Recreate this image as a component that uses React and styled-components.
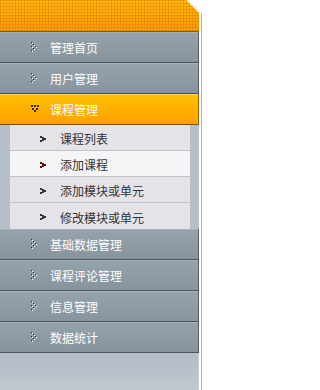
import React, { useState } from "react";
import styled, { createGlobalStyle } from "styled-components";

const menu = [
  { title: "管理首页" },
  { title: "用户管理" },
  {
    title: "课程管理",
    open: true,
    children: ["课程列表", "添加课程", "添加模块或单元", "修改模块或单元"],
  },
  { title: "基础数据管理" },
  { title: "课程评论管理" },
  { title: "信息管理" },
  { title: "数据统计" },
];

const DotArrow = () => (
  <svg width="9" height="10" viewBox="0 0 9 10">
    {[
      [0, 0],
      [2, 2],
      [4, 4],
      [2, 6],
      [0, 8],
      [0, 4],
    ].map(([x, y]) => (
      <g key={`${x}-${y}`}>
        <rect x={x + 1} y={y + 1} width="1" height="1" fill="#fff" />
        <rect x={x} y={y} width="1" height="1" fill="#1e242a" />
      </g>
    ))}
  </svg>
);

const DotDown = () => (
  <svg width="9" height="8" viewBox="0 0 9 8">
    {[
      [0, 0],
      [3, 0],
      [6, 0],
      [1, 3],
      [5, 3],
      [3, 5],
    ].map(([x, y]) => (
      <g key={`${x}-${y}`}>
        <rect x={x + 1} y={y + 1} width="1" height="1" fill="#ffe27a" />
        <rect x={x} y={y} width="2" height="2" fill="#3a2500" />
      </g>
    ))}
  </svg>
);

const SubArrow = ({ active }) => (
  <svg width="6" height="6" viewBox="0 0 6 6">
    <path
      d="M0 0h2v1h2v1h2v2h-2v1h-2v1h-2v-2h2v-2h-2z"
      fill={active ? "#6a0a0a" : "#2e3640"}
    />
  </svg>
);

export default function App() {
  const [current, setCurrent] = useState("添加课程");

  return (
    <>
      <GlobalStyle />
      <Frame>
        <Bevel width="16" height="16" viewBox="0 0 16 16">
          <line x1="1" y1="-0.5" x2="14.5" y2="13" stroke="#a9a9a9" />
        </Bevel>
        <Menu>
          <Header />
          {menu.map((item) => (
            <Section key={item.title}>
              <Item $open={item.open}>
                <IconBox>{item.open ? <DotDown /> : <DotArrow />}</IconBox>
                {item.title}
              </Item>
              {item.open && (
                <SubList>
                  {item.children.map((child) => (
                    <SubItem
                      key={child}
                      $active={child === current}
                      onClick={() => setCurrent(child)}
                    >
                      <SubIcon>
                        <SubArrow active={child === current} />
                      </SubIcon>
                      {child}
                    </SubItem>
                  ))}
                </SubList>
              )}
            </Section>
          ))}
          <Filler />
        </Menu>
      </Frame>
    </>
  );
}

const GlobalStyle = createGlobalStyle`
  html, body {
    margin: 0;
    padding: 0;
    background: #fff;
  }
  body {
    font-family: "Noto Sans CJK SC", "Liberation Sans", sans-serif;
    font-size: 12px;
  }
`;

const Frame = styled.div`
  position: relative;
  width: 199px;
  height: 390px;
  padding-right: 2px;
  border-right: 1px solid #b4b4b4;
  background: #fff;
  clip-path: polygon(0 0, 188px 0, 202px 14px, 202px 100%, 0 100%);
`;

const Bevel = styled.svg`
  position: absolute;
  top: 0;
  left: 187px;
  z-index: 2;
`;

const Menu = styled.div`
  display: flex;
  flex-direction: column;
  height: 100%;
  width: 199px;
  clip-path: polygon(0 0, 186px 0, 199px 13px, 199px 100%, 0 100%);
`;

const Header = styled.div`
  height: 31px;
  flex-shrink: 0;
  border-bottom: 1px solid #7a5c1c;
  background-color: #ffa800;
  background-image: linear-gradient(
      90deg,
      rgba(214, 120, 0, 0.4) 1px,
      transparent 1px
    ),
    linear-gradient(rgba(214, 120, 0, 0.4) 1px, transparent 1px),
    linear-gradient(#ffbc10, #ff9a00);
  background-size: 3px 3px, 3px 3px, 100% 100%;
`;

const Section = styled.div`
  display: flex;
  flex-direction: column;
`;

const Item = styled.div`
  display: flex;
  align-items: center;
  height: 30px;
  padding-left: 31px;
  color: #fff;
  font-size: 12px;
  cursor: pointer;
  border-bottom: 1px solid ${(p) => (p.$open ? "#6e5420" : "#4b5560")};
  border-right: 1px solid ${(p) => (p.$open ? "#8a6a20" : "#56616b")};
  box-shadow: inset 0 1px 0
    ${(p) => (p.$open ? "#ffd24a" : "rgba(255, 255, 255, 0.18)")};
  background: ${(p) =>
    p.$open
      ? "linear-gradient(#ffc200, #ff9e00)"
      : "linear-gradient(#96a2ac, #87939d)"};
`;

const IconBox = styled.span`
  display: flex;
  align-items: center;
  width: 9px;
  margin-right: 10px;
`;

const SubList = styled.div`
  display: flex;
  flex-direction: column;
  padding: 0 9px 0 10px;
  background: #b5bfc8;
`;

const SubItem = styled.div`
  display: flex;
  align-items: center;
  height: 23px;
  padding: 2px 0 0 30px;
  color: #333;
  font-size: 12px;
  cursor: pointer;
  border-bottom: 1px solid #c3c2cb;
  background: ${(p) => (p.$active ? "#f5f5f7" : "#e6e3e8")};

  &:last-child {
    border-bottom: none;
    height: 24px;
  }
`;

const SubIcon = styled.span`
  display: flex;
  align-items: center;
  width: 6px;
  margin-right: 14px;
`;

const Filler = styled.div`
  flex: 1;
  background: linear-gradient(#b2bcc5, #bfc7cf);
  border-right: 1px solid #c9cfd5;
`;
